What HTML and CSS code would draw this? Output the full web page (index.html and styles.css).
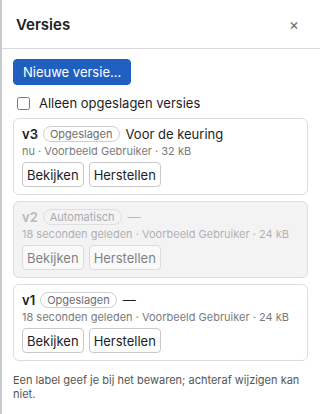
FILE: index.html
```html
<!DOCTYPE html>
<html lang="nl">
<head>
    <meta charset="UTF-8">
    <meta name="viewport" content="width=device-width, initial-scale=1.0">
    <title>Versies</title>
    <link rel="stylesheet" href="styles.css">
</head>
<body>
    <aside class="panel">
        <div class="panel-header">
            <h2>Versies</h2>
            <button class="close" title="Sluiten">&times;</button>
        </div>

        <div class="panel-body">
            <button class="primary">Nieuwe versie…</button>

            <label class="filter">
                <input type="checkbox">
                <span>Alleen opgeslagen versies</span>
            </label>

            <!-- Versielijst -->
            <div class="versions">
                <div class="card">
                    <div class="card-title">
                        <strong>v3</strong>
                        <span class="badge">Opgeslagen</span>
                        <span class="label">Voor de keuring</span>
                    </div>
                    <div class="meta">nu · Voorbeeld Gebruiker · 32 kB</div>
                    <div class="actions">
                        <button>Bekijken</button>
                        <button>Herstellen</button>
                    </div>
                </div>

                <div class="card auto">
                    <div class="card-title">
                        <strong>v2</strong>
                        <span class="badge">Automatisch</span>
                        <span class="label">—</span>
                    </div>
                    <div class="meta">18 seconden geleden · Voorbeeld Gebruiker · 24 kB</div>
                    <div class="actions">
                        <button>Bekijken</button>
                        <button>Herstellen</button>
                    </div>
                </div>

                <div class="card">
                    <div class="card-title">
                        <strong>v1</strong>
                        <span class="badge">Opgeslagen</span>
                        <span class="label">—</span>
                    </div>
                    <div class="meta">18 seconden geleden · Voorbeeld Gebruiker · 24 kB</div>
                    <div class="actions">
                        <button>Bekijken</button>
                        <button>Herstellen</button>
                    </div>
                </div>
            </div>

            <p class="hint">Een label geef je bij het bewaren; achteraf wijzigen kan niet.</p>
        </div>
    </aside>
</body>
</html>
```

FILE: styles.css
```css
body {
    margin: 0;
    font-family: Inter, "Liberation Sans", Arial, sans-serif;
    font-size: 13px;
    color: #1d1d1f;
    background: #fff;
}
.panel {
    border-left: 2px solid #c9c9ce;
    height: 414px;
    box-sizing: border-box;
}
.panel-header {
    display: flex;
    align-items: center;
    justify-content: space-between;
    height: 48px;
    padding: 0 21px 0 14px;
    border-bottom: 1px solid #d9d9de;
}
.panel-header h2 {
    margin: 0;
    font-size: 15px;
    font-weight: 600;
}
.close {
    border: none;
    background: none;
    padding: 0;
    height: auto;
    font-size: 15px;
    color: #6a6a6e;
    font-family: inherit;
    cursor: pointer;
}

.panel-body { padding: 10px 12px 12px 11px; }

button {
    font-family: inherit;
    font-size: 13px;
    color: #1d1d1f;
    background: #fff;
    border: 1px solid #c8c8cc;
    border-radius: 4px;
    padding: 0 4px;
    height: 25px;
    cursor: pointer;
}
button.primary {
    background: #1f5fbf;
    border-color: #1f5fbf;
    color: #fff;
    height: 26px;
    padding: 0 9px;
    border-radius: 4px;
}

.filter {
    display: flex;
    align-items: center;
    gap: 9px;
    height: 20px;
    margin: 8px 0 5px 4px;
    font-size: 13px;
}
.filter input {
    margin: 0;
    width: 13px;
    height: 13px;
}

.versions {
    display: flex;
    flex-direction: column;
    gap: 6px;
}
.card {
    border: 1px solid #dcdce0;
    border-radius: 6px;
    padding: 7px 8px 7px 8px;
}
.card.auto {
    background: #f3f3f4;
    color: #8a8a8e;
}
.card.auto .card-title,
.card.auto .meta,
.card.auto .actions { opacity: .55; }

.card-title {
    display: flex;
    align-items: center;
    gap: 5px;
    height: 16px;
    font-size: 13px;
}
.card-title strong { font-weight: 600; }
.badge {
    font-size: 11px;
    color: #6e6e73;
    border: 1px solid #cfcfd3;
    border-radius: 10px;
    padding: 0 6px;
    line-height: 14px;
    margin-right: 1px;
}
.meta {
    font-size: 11px;
    color: #7a7a7e;
    line-height: 14px;
    margin-top: 2px;
}
.actions {
    display: flex;
    gap: 5px;
    margin-top: 4px;
}

.hint {
    margin: 12px 0 0 0;
    font-size: 11px;
    line-height: 14px;
    color: #555;
}
```
